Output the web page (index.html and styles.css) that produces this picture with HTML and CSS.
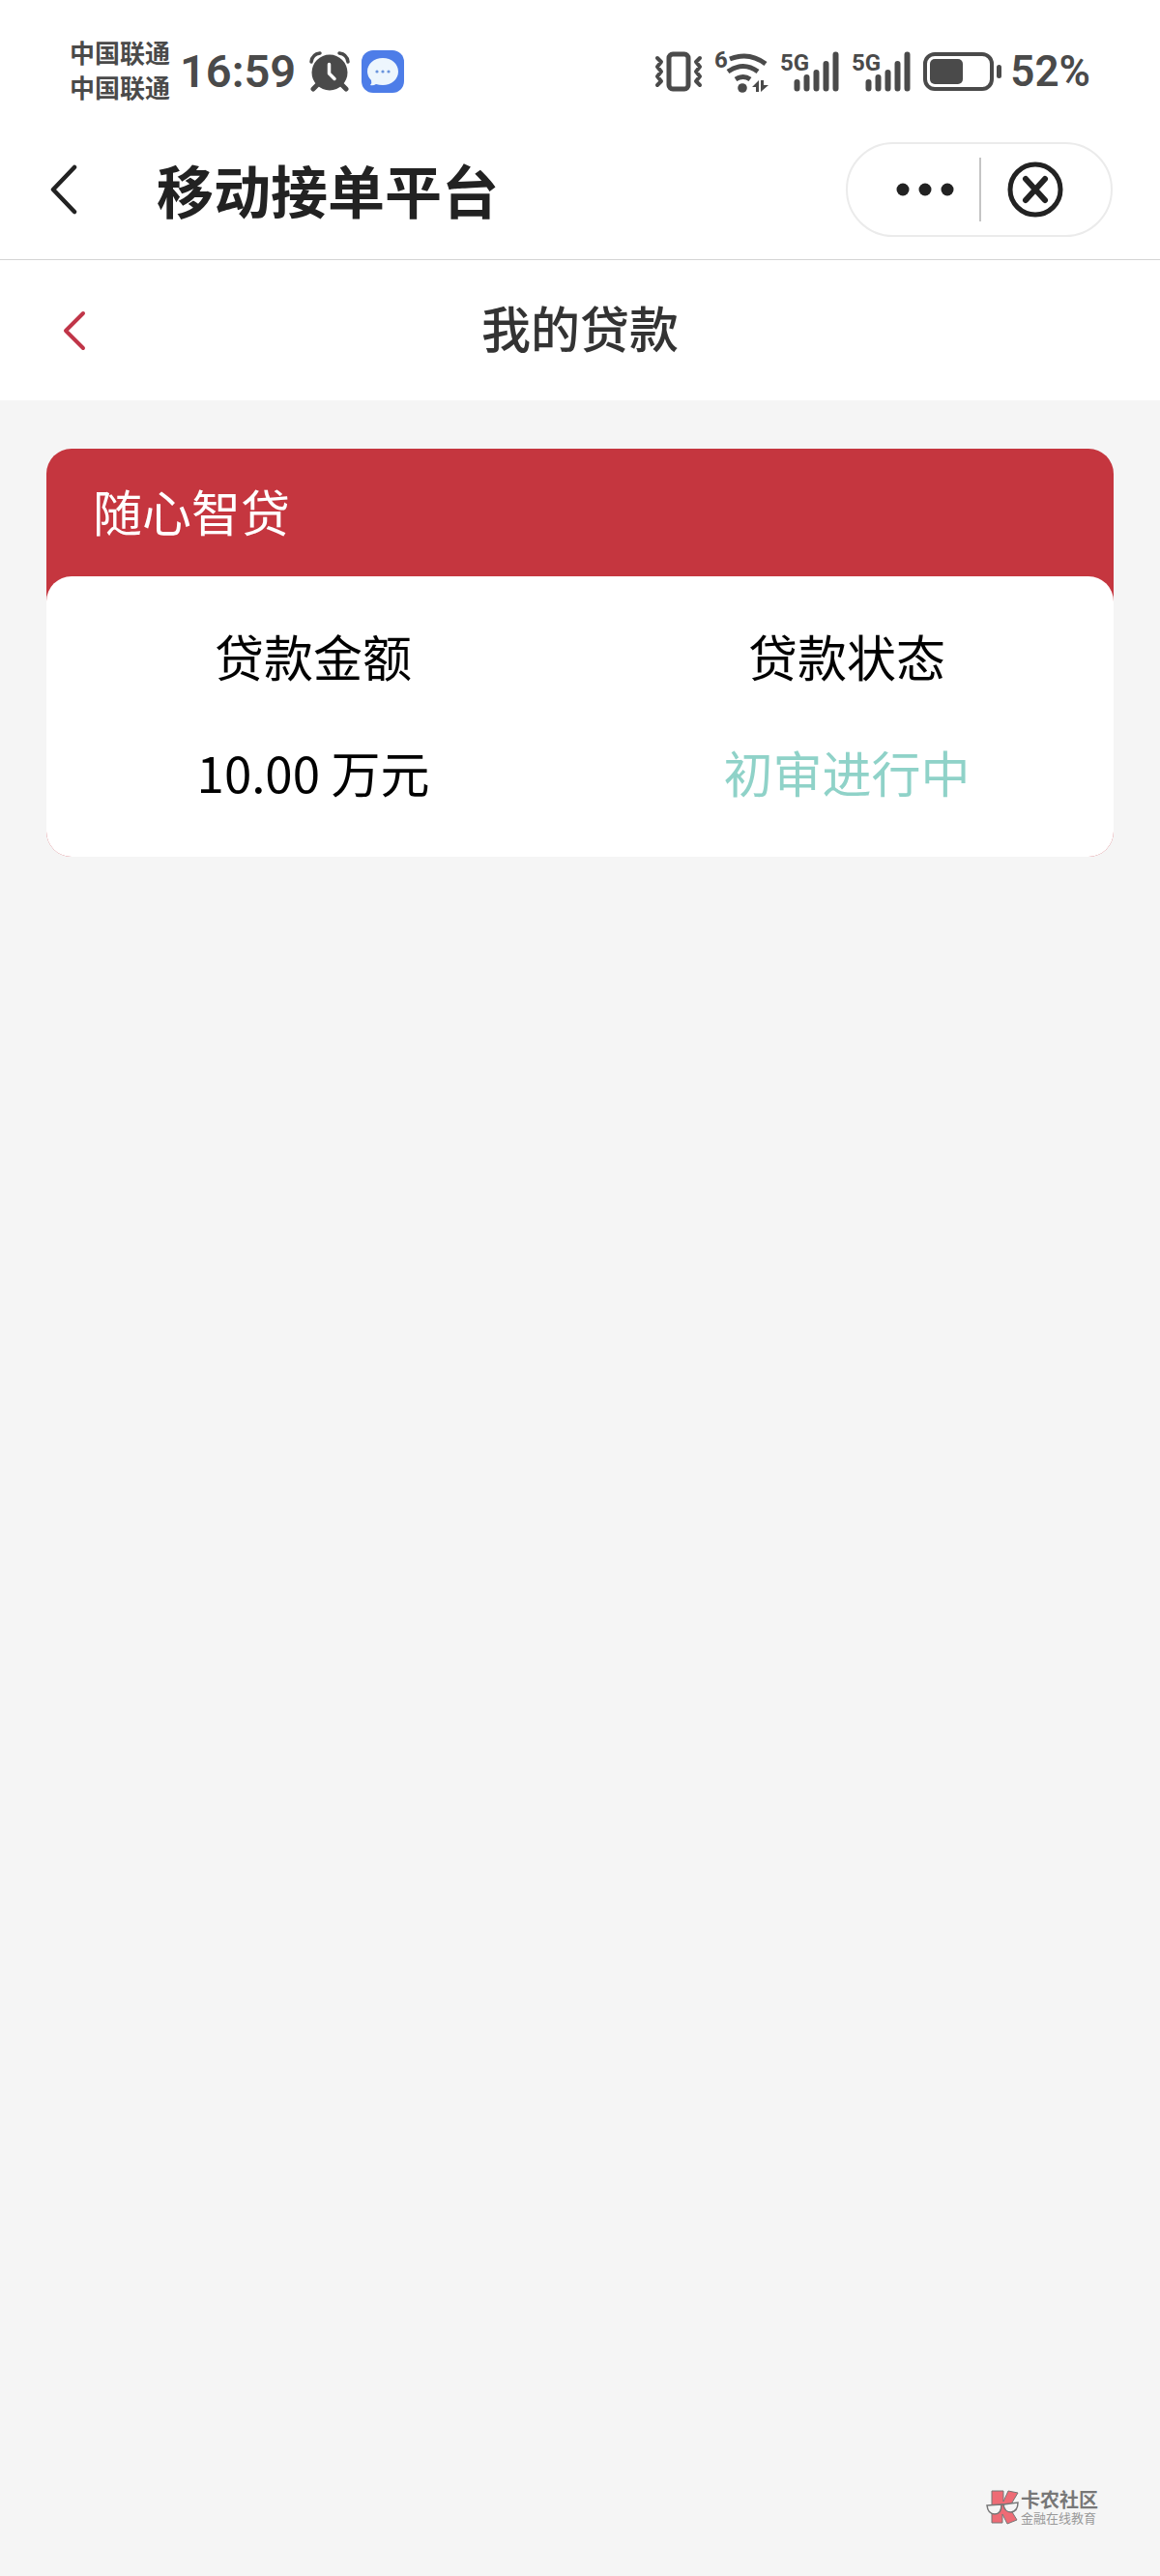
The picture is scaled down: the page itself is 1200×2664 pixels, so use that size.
FILE: index.html
```html
<!DOCTYPE html>
<html lang="zh-CN">
<head>
  <meta charset="UTF-8">
  <meta name="viewport" content="width=device-width, initial-scale=1.0">
  <title>我的贷款</title>
  <link rel="stylesheet" href="styles.css">
</head>
<body>
  <div class="status-bar">
    <div class="status-left">
      <div class="carriers">
        <span>中国联通</span>
        <span>中国联通</span>
      </div>
      <span class="time">16:59</span>
      <svg class="alarm" width="42" height="42" viewBox="0 0 42 42">
        <circle cx="21" cy="22" r="18.5" fill="#4a4a4a"/>
        <path d="M2 11Q3 3 11 2M40 11Q39 3 31 2" fill="none" stroke="#4a4a4a" stroke-width="3.5" stroke-linecap="round"/>
        <path d="M9 34L4 39M33 34L38 39" stroke="#4a4a4a" stroke-width="5" stroke-linecap="round"/>
        <path d="M20.500 13.500V23L26 28.500" fill="none" stroke="#fff" stroke-width="3.500" stroke-linecap="round" stroke-linejoin="round"/>
      </svg>
      <svg class="message" width="44" height="44" viewBox="0 0 44 44">
        <rect width="44" height="44" rx="12" fill="#4d7de8"/>
        <path d="M22 8C31 8 38 14 38 22S31 36 22 36Q18 36 15 35Q12 37 9 36Q11 34 10 31Q6 27 6 22C6 14 13 8 22 8Z" fill="#edf6fd"/>
        <circle cx="16" cy="22" r="1.600" fill="#6a94dc"/>
        <circle cx="22" cy="22" r="1.600" fill="#6a94dc"/>
        <circle cx="28" cy="22" r="1.600" fill="#6a94dc"/>
      </svg>
    </div>

    <div class="status-right">
      <svg width="50" height="42" viewBox="0 0 50 42">
        <rect x="15" y="3" width="20" height="36" rx="4" fill="none" stroke="#4a4a4a" stroke-width="5"/>
        <path d="M3 7L7 11L3 16L7 21L3 26L7 31L3 35M47 7L43 11L47 16L43 21L47 26L43 31L47 35" fill="none" stroke="#4a4a4a" stroke-width="4" stroke-linecap="round" stroke-linejoin="round"/>
      </svg>
      <svg width="56" height="54" viewBox="0 -6 56 54">
        <text class="net-label" x="0" y="17">6</text>
        <path d="M16 8Q36 0 53 13M14 21Q30 10 45 21M22 29Q30 24 37 29" fill="none" stroke="#4a4a4a" stroke-width="5"/>
        <circle cx="29" cy="38" r="4.800" fill="#4a4a4a"/>
        <path d="M39 37L46 30V42H43V37ZM48 30H51V35H56L48 42Z" fill="#4a4a4a"/>
      </svg>
      <svg width="62" height="54" viewBox="0 -6 62 54">
        <text class="net-label" x="0" y="20">5G</text>
        <path d="M17.500 32V38.500M27.500 27V38.500M37.500 22V38.500M47.500 13V38.500M57.500 3.500V38.500" stroke="#4a4a4a" stroke-width="6" stroke-linecap="round"/>
      </svg>
      <svg width="62" height="54" viewBox="0 -6 62 54">
        <text class="net-label" x="0" y="20">5G</text>
        <path d="M17.500 32V38.500M27.500 27V38.500M37.500 22V38.500M47.500 13V38.500M57.500 3.500V38.500" stroke="#4a4a4a" stroke-width="6" stroke-linecap="round"/>
      </svg>
      <svg class="battery" width="82" height="40" viewBox="0 0 82 40">
        <rect x="2" y="2" width="69" height="36" rx="10" fill="none" stroke="#4a4a4a" stroke-width="4"/>
        <rect x="7" y="7" width="34" height="26" rx="5" fill="#4a4a4a"/>
        <rect x="76" y="13" width="5" height="14" rx="2.500" fill="#4a4a4a"/>
      </svg>
      <span class="percent">52%</span>
    </div>
  </div>

  <header class="app-bar">
    <button type="button" class="back" aria-label="返回">
      <svg width="28" height="52" viewBox="0 0 28 52">
        <path d="M25 3L3 26L25 49" fill="none" stroke="#222" stroke-width="4.500" stroke-linecap="round" stroke-linejoin="round"/>
      </svg>
    </button>
    <h1>移动接单平台</h1>
    <div class="capsule">
      <button type="button" class="more" aria-label="更多">
        <svg width="60" height="14" viewBox="0 0 60 14">
          <circle cx="7" cy="7" r="6.500" fill="#222"/>
          <circle cx="30" cy="7" r="6.500" fill="#222"/>
          <circle cx="53" cy="7" r="6.500" fill="#222"/>
        </svg>
      </button>
      <button type="button" class="close" aria-label="关闭">
        <svg width="58" height="58" viewBox="0 0 58 58">
          <circle cx="29" cy="29" r="26" fill="none" stroke="#222" stroke-width="5"/>
          <path d="M19 18L39 40M39 18L19 40" stroke="#222" stroke-width="6" stroke-linecap="round"/>
        </svg>
      </button>
    </div>
  </header>

  <nav class="page-bar">
    <a href="#" class="page-back" aria-label="返回">
      <svg width="24" height="42" viewBox="0 0 24 42">
        <path d="M21 3L3 21L21 39" fill="none" stroke="#c03548" stroke-width="4" stroke-linecap="round" stroke-linejoin="round"/>
      </svg>
    </a>
    <h2>我的贷款</h2>
  </nav>

  <main>
    <section class="loan-card">
      <h3>随心智贷</h3>
      <div class="loan-body">
        <table>
          <thead>
            <tr>
              <th scope="col">贷款金额</th>
              <th scope="col">贷款状态</th>
            </tr>
          </thead>
          <tbody>
            <tr>
              <td>10.00 万元</td>
              <td class="pending">初审进行中</td>
            </tr>
          </tbody>
        </table>
      </div>
    </section>
  </main>

  <footer>
    <svg width="34" height="36" viewBox="0 0 34 36">
      <path d="M6 1H18V12L23 1L33 3L24 18L32 31L22 35L17 25V34H6Z" fill="#ee6b75" stroke="#777" stroke-width="1"/>
      <path d="M1 16L16 15Q16 25 9 25Q2 25 1 16ZM18 15L33 13Q33 22 26 23Q19 23 18 15Z" fill="#f5f5f5" stroke="#777" stroke-width="1.500"/>
      <path d="M15 16Q17 14 19 16" fill="none" stroke="#777" stroke-width="1.500"/>
    </svg>
    <div class="brand">
      <strong>卡农社区</strong>
      <span>金融在线教育</span>
    </div>
  </footer>
</body>
</html>
```
FILE: styles.css
```css
* {
  box-sizing: border-box;
}

body {
  margin: 0;
  min-height: 100vh;
  display: flex;
  flex-direction: column;
  background-color: #f5f5f5;
  color: #000;
  font-family: "Noto Sans CJK SC", sans-serif;
}

h1, h2, h3 {
  margin: 0;
}

svg {
  display: block;
  flex-shrink: 0;
}

button {
  padding: 0;
  border: none;
  background: none;
  cursor: pointer;
}

/* status bar */
.status-bar {
  display: flex;
  justify-content: space-between;
  align-items: center;
  height: 124px;
  padding: 24px 72px 0;
  background-color: #fff;
  color: #4a4a4a;
}

.status-left,
.status-right {
  display: flex;
  align-items: center;
}

.carriers {
  display: flex;
  flex-direction: column;
  padding-bottom: 4px;
  font-size: 26px;
  font-weight: 700;
  line-height: 36px;
}

.time,
.percent {
  font-family: Roboto, sans-serif;
  font-weight: 600;
  line-height: 56px;
}

.time {
  margin-left: 10px;
  font-size: 47px;
}

.alarm {
  margin-left: 14px;
}

.message {
  margin-left: 12px;
}

.status-right {
  gap: 12px;
}

.percent {
  margin-left: -4px;
  font-size: 44px;
}

.net-label {
  font-family: Roboto, sans-serif;
  font-size: 24px;
  font-weight: 700;
  fill: #4a4a4a;
}

/* app title */
.app-bar {
  display: flex;
  align-items: center;
  height: 145px;
  padding: 0 49px 0 52px;
  background-color: #fff;
  border-bottom: 1px solid #d4d4d4;
}

.app-bar h1 {
  flex: 1;
  margin-left: 82px;
  color: #222;
  font-size: 59px;
  font-weight: 700;
  line-height: 80px;
}

.capsule {
  display: flex;
  align-items: center;
  width: 276px;
  height: 98px;
  border: 2px solid #ebebeb;
  border-radius: 49px;
}

.more,
.close {
  display: flex;
  align-items: center;
  height: 66px;
}

.more {
  width: 138px;
  padding-left: 50px;
  border-right: 2px solid #c4c4c4;
}

.close {
  flex: 1;
  padding-left: 27px;
}

/* page title */
.page-bar {
  display: grid;
  grid-template-columns: 1fr auto 1fr;
  align-items: center;
  height: 145px;
  padding: 0 65px;
  background-color: #fff;
}

.page-back {
  justify-self: start;
}

.page-bar h2 {
  padding-bottom: 8px;
  color: #333;
  font-size: 51px;
  font-weight: 500;
  line-height: 72px;
}

/* loan card */
main {
  flex: 1;
  padding: 50px 48px;
}

.loan-card {
  background-color: #c5363f;
  border-radius: 26px;
}

.loan-card h3 {
  padding: 28px 48px 32px;
  color: #fff;
  font-size: 51px;
  font-weight: 400;
  line-height: 72px;
}

.loan-body {
  padding: 22px 0 28px;
  background-color: #fff;
  border-radius: 26px;
}

.loan-body table {
  width: 100%;
  border-collapse: collapse;
  table-layout: fixed;
}

.loan-body th,
.loan-body td {
  padding: 24px 0;
  font-size: 51px;
  font-weight: 400;
  line-height: 72px;
  text-align: center;
}

.loan-body .pending {
  color: #8fd2c8;
}

/* watermark */
footer {
  display: flex;
  justify-content: flex-end;
  align-items: center;
  gap: 2px;
  padding: 0 64px 52px;
  color: #777;
}

.brand {
  display: flex;
  flex-direction: column;
}

.brand strong {
  font-size: 20px;
  line-height: 22px;
}

.brand span {
  color: #999;
  font-size: 13px;
  line-height: 16px;
}
```
